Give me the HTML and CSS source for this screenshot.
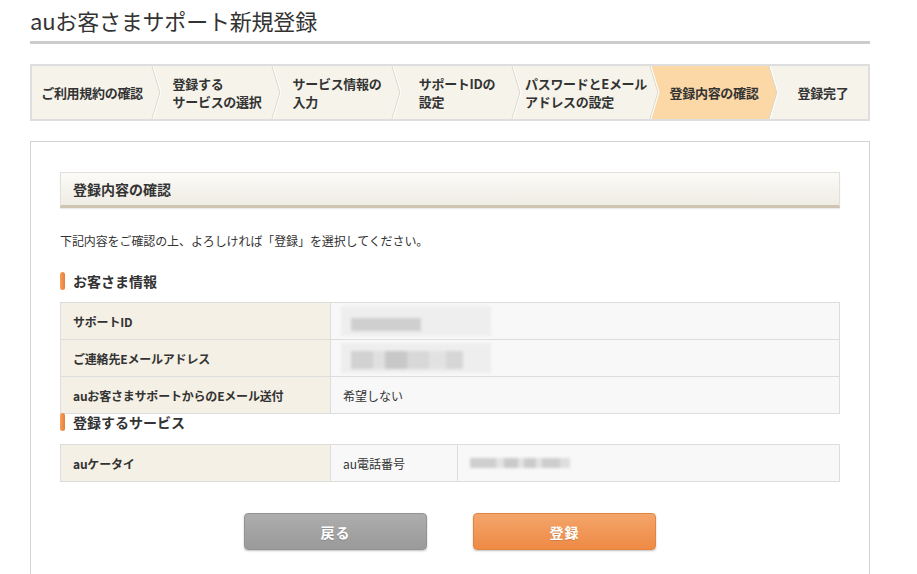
FILE: index.html
```html
<!DOCTYPE html>
<html lang="ja">
<head>
<meta charset="utf-8">
<title>auお客さまサポート新規登録</title>
<link rel="stylesheet" href="styles.css">
</head>
<body>
<div class="page">
  <h1 class="title">auお客さまサポート新規登録</h1>

  <ol class="steps">
    <li class="step s1"><span>ご利用規約の確認</span></li>
    <li class="sep"><svg viewBox="0 0 10 53" preserveAspectRatio="none"><polyline points="0,0 8,26.5 0,53" class="ln-g"/><polyline points="1,0 9,26.5 1,53" class="ln-w"/></svg></li>
    <li class="step s2"><span>登録する<br>サービスの選択</span></li>
    <li class="sep"><svg viewBox="0 0 10 53" preserveAspectRatio="none"><polyline points="0,0 8,26.5 0,53" class="ln-g"/><polyline points="1,0 9,26.5 1,53" class="ln-w"/></svg></li>
    <li class="step s3"><span>サービス情報の<br>入力</span></li>
    <li class="sep"><svg viewBox="0 0 10 53" preserveAspectRatio="none"><polyline points="0,0 8,26.5 0,53" class="ln-g"/><polyline points="1,0 9,26.5 1,53" class="ln-w"/></svg></li>
    <li class="step s4"><span>サポートIDの<br>設定</span></li>
    <li class="sep"><svg viewBox="0 0 10 53" preserveAspectRatio="none"><polyline points="0,0 8,26.5 0,53" class="ln-g"/><polyline points="1,0 9,26.5 1,53" class="ln-w"/></svg></li>
    <li class="step s5"><span>パスワードとEメール<br>アドレスの設定</span></li>
    <li class="sep"><svg viewBox="0 0 10 53" preserveAspectRatio="none"><polygon points="1,0 10,0 10,53 1,53 9,26.5" class="fill-o"/><polyline points="0,0 8,26.5 0,53" class="ln-g"/><polyline points="1,0 9,26.5 1,53" class="ln-w"/></svg></li>
    <li class="step s6 active"><span>登録内容の確認</span></li>
    <li class="sep"><svg viewBox="0 0 10 53" preserveAspectRatio="none"><polygon points="0,0 1,0 9,26.5 1,53 0,53" class="fill-o"/><polyline points="1,0 9,26.5 1,53" class="ln-g"/><polyline points="2,0 10,26.5 2,53" class="ln-w"/></svg></li>
    <li class="step s7"><span>登録完了</span></li>
  </ol>

  <div class="main">
    <h2 class="box-head">登録内容の確認</h2>
    <p class="lead">下記内容をご確認の上、よろしければ「登録」を選択してください。</p>

    <h3 class="sub">お客さま情報</h3>
    <table class="info">
      <tr>
        <th>サポートID</th>
        <td><div class="mask mask-id"><i></i></div></td>
      </tr>
      <tr>
        <th>ご連絡先Eメールアドレス</th>
        <td><div class="mask mask-mail"><i></i></div></td>
      </tr>
      <tr>
        <th>auお客さまサポートからのEメール送付</th>
        <td>希望しない</td>
      </tr>
    </table>

    <h3 class="sub sub2">登録するサービス</h3>
    <table class="info svc">
      <tr>
        <th>auケータイ</th>
        <td class="k">au電話番号</td>
        <td><div class="mask mask-tel"><i></i></div></td>
      </tr>
    </table>

    <div class="actions">
      <button class="btn back" type="button">戻る</button>
      <button class="btn submit" type="button">登録</button>
    </div>
  </div>
</div>
</body>
</html>
```

FILE: styles.css
```css
* { box-sizing: border-box; }

html, body {
  margin: 0;
  padding: 0;
  background: #fff;
}

body {
  font-family: "Noto Sans CJK JP", "Noto Sans", "Liberation Sans", sans-serif;
  color: #333;
}

.page {
  width: 840px;
  margin-left: 30px;
}

.title {
  margin: 4px 0 0;
  padding-bottom: 5px;
  font-size: 22px;
  line-height: 32px;
  font-weight: 400;
  color: #333;
  border-bottom: 3px solid #cccccc;
  letter-spacing: -0.2px;
}

/* steps */
.steps {
  list-style: none;
  margin: 20px 0 0;
  padding: 0;
  height: 57px;
  display: flex;
  border: 2px solid #dedede;
  background: #f6f3ea;
}

.step {
  display: flex;
  align-items: center;
  justify-content: center;
  font-size: 13px;
  font-weight: 700;
  line-height: 18px;
  color: #333;
  white-space: nowrap;
  letter-spacing: -0.3px;
}

.step span { text-align: left; }

.s1 { width: 120px; }
.s2, .s3, .s4 { width: 110px; }
.s5 { width: 128px; }
.s6 { width: 108px; }
.s7 { flex: 1; }

.active { background: #fbd8a5; }

.sep {
  width: 10px;
  flex: none;
}

.sep svg {
  display: block;
  width: 10px;
  height: 53px;
  overflow: visible;
}

.ln-g { fill: none; stroke: #d9d5cb; stroke-width: 1; }
.ln-w { fill: none; stroke: #ffffff; stroke-width: 1; }
.fill-o { fill: #fbd8a5; }

/* main */
.main {
  margin-top: 20px;
  border: 1px solid #d3d3d3;
  padding: 30px 29px 40px;
  min-height: 440px;
}

.box-head {
  margin: 0;
  height: 36px;
  padding: 0 12px;
  font-size: 14px;
  line-height: 32px;
  font-weight: 700;
  color: #333;
  border: 1px solid #e2e0da;
  border-bottom: 3px solid #cdc5b1;
  background: linear-gradient(#fcfbf8, #efece4);
  box-shadow: 0 1px 1px rgba(0,0,0,0.08);
}

.lead {
  margin: 24px 0 0;
  font-size: 12px;
  line-height: 18px;
  color: #333;
  letter-spacing: -0.1px;
}

.sub {
  margin: 22px 0 0;
  height: 18px;
  display: flex;
  align-items: center;
  gap: 8px;
  font-size: 14px;
  line-height: 18px;
  font-weight: 700;
  color: #333;
}

.sub::before {
  content: "";
  width: 5px;
  height: 18px;
  border-radius: 3px;
  background: linear-gradient(90deg, #f4a060, #ea7f33);
}

.sub2 { margin-top: -1px; }

.info {
  width: 780px;
  margin-top: 12px;
  border-collapse: collapse;
  table-layout: fixed;
}

.info th,
.info td {
  height: 37px;
  padding: 0 12px;
  border: 1px solid #dddddd;
  font-size: 12px;
  text-align: left;
  vertical-align: middle;
  color: #333;
}

.info th {
  width: 270px;
  background: #f5f0e5;
  font-weight: 700;
  letter-spacing: -0.2px;
}

.info td {
  background: #f8f8f8;
  font-weight: 400;
}

.svc { margin-top: 13px; }
.svc td.k { width: 127px; }

/* masked values */
.mask {
  position: relative;
  filter: blur(1.4px);
}

.mask i {
  display: block;
  background: #cfcfcf;
}

.mask-id {
  width: 150px;
  height: 30px;
  margin-left: -2px;
  padding: 12px 0 0 10px;
  background: #eeeeee;
}
.mask-id i { width: 70px; height: 13px; }

.mask-mail {
  width: 150px;
  height: 30px;
  margin-left: -2px;
  padding: 8px 0 0 10px;
  background: #eeeeee;
}
.mask-mail i {
  width: 112px;
  height: 18px;
  background: linear-gradient(90deg, #d2d2d2 0 20%, #e0e0e0 20% 30%, #c8c8c8 30% 50%, #d8d8d8 50% 70%, #e2e2e2 70% 85%, #d6d6d6 85%);
}

.mask-tel {
  width: 100px;
  height: 10px;
  background: transparent;
}
.mask-tel i {
  width: 100px;
  height: 10px;
  background: linear-gradient(90deg, #cfcfcf 0 26%, #e2e2e2 26% 34%, #c9c9c9 34% 48%, #e2e2e2 48% 54%, #cbcbcb 54% 66%, #e2e2e2 66% 72%, #cdcdcd 72% 90%, #dedede 90%);
}

/* buttons */
.actions {
  display: flex;
  justify-content: center;
  gap: 46px;
  margin-top: 31px;
}

.btn {
  width: 183px;
  height: 37px;
  border-radius: 4px;
  font-family: "Noto Sans CJK JP", "Noto Sans", sans-serif;
  font-size: 14px;
  font-weight: 700;
  color: #fff;
  text-shadow: 0 1px 1px rgba(0,0,0,0.15);
  cursor: pointer;
  box-shadow: 0 1px 2px rgba(0,0,0,0.25);
  letter-spacing: 1px;
}

.back {
  border: 1px solid #939393;
  background: linear-gradient(#adadad, #9a9a9a);
}

.submit {
  border: 1px solid #e3853f;
  background: linear-gradient(#f4a56b, #ee8a45);
}
```
